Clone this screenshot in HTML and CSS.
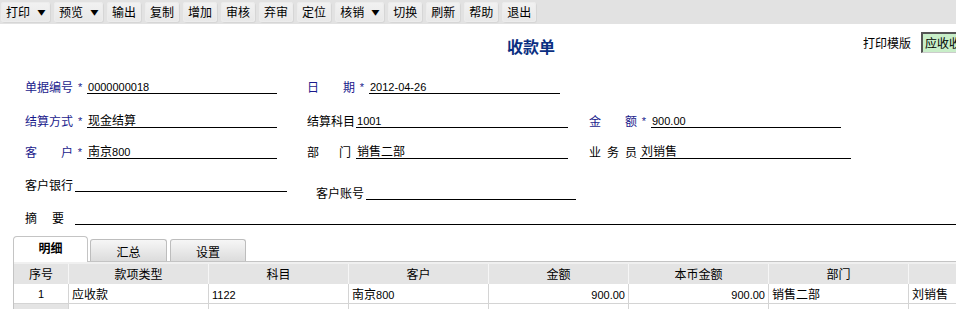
FILE: index.html
```html
<!DOCTYPE html>
<html lang="zh-CN">
<head>
<meta charset="utf-8">
<title>收款单</title>
<link rel="stylesheet" href="styles.css">
</head>
<body>
<div class="toolbar">
  <span class="btn">打印<span class="arrow">▼</span></span>
  <span class="btn">预览<span class="arrow">▼</span></span>
  <span class="btn">输出</span>
  <span class="btn">复制</span>
  <span class="btn">增加</span>
  <span class="btn">审核</span>
  <span class="btn">弃审</span>
  <span class="btn">定位</span>
  <span class="btn">核销<span class="arrow">▼</span></span>
  <span class="btn">切换</span>
  <span class="btn">刷新</span>
  <span class="btn">帮助</span>
  <span class="btn">退出</span>
</div>

<div class="head">
  <div class="title">收款单</div>
  <div class="tpl">
    <span class="tpl-label">打印模版</span>
    <span class="tpl-select">应收收</span>
  </div>
</div>

<div class="form">
  <div class="row r1">
    <div class="field f1"><span class="lbl req">单据编号</span><span class="star">*</span><span class="inp w190"><span class="num">0000000018</span></span></div>
    <div class="field f2"><span class="lbl req just">日<i></i>期</span><span class="star">*</span><span class="inp w191"><span class="num">2012-04-26</span></span></div>
  </div>
  <div class="row r2">
    <div class="field f1"><span class="lbl req">结算方式</span><span class="star">*</span><span class="inp w190">现金结算</span></div>
    <div class="field f2"><span class="lbl">结算科目</span><span class="inp w212 gap1"><span class="num">1001</span></span></div>
    <div class="field f3"><span class="lbl req just">金<i></i>额</span><span class="star">*</span><span class="inp w190"><span class="num">900.00</span></span></div>
  </div>
  <div class="row r3">
    <div class="field f1"><span class="lbl req just">客<i></i>户</span><span class="star">*</span><span class="inp w190">南京<span class="num">800</span></span></div>
    <div class="field f2"><span class="lbl just narrow">部<i></i>门</span><span class="inp w212 gap5">销售二部</span></div>
    <div class="field f3"><span class="lbl just">业<i></i>务<i></i>员</span><span class="inp w211 gap3">刘销售</span></div>
  </div>
  <div class="row r4">
    <div class="field f4"><span class="lbl">客户银行</span><span class="inp w212 gap2"></span></div>
    <div class="field f5"><span class="lbl">客户账号</span><span class="inp w210 gap2"></span></div>
  </div>
  <div class="row r5">
    <div class="field grow"><span class="lbl just narrow2">摘<i></i>要</span><span class="inp grow gap2"></span></div>
  </div>
</div>

<div class="tabs">
  <span class="tab active">明细</span>
  <span class="tab t2">汇总</span>
  <span class="tab t3">设置</span>
</div>
<div class="panel">
  <div class="band"></div>
  <div class="grid">
    <div class="hd c1">序号</div>
    <div class="hd">款项类型</div>
    <div class="hd">科目</div>
    <div class="hd">客户</div>
    <div class="hd">金额</div>
    <div class="hd">本币金额</div>
    <div class="hd">部门</div>
    <div class="hd"></div>

    <div class="cell c1 ctr num">1</div>
    <div class="cell">应收款</div>
    <div class="cell"><span class="num">1122</span></div>
    <div class="cell">南京<span class="num">800</span></div>
    <div class="cell right"><span class="num">900.00</span></div>
    <div class="cell right"><span class="num">900.00</span></div>
    <div class="cell">销售二部</div>
    <div class="cell">刘销售</div>

    <div class="cell c1 gray"></div>
    <div class="cell"></div>
    <div class="cell"></div>
    <div class="cell"></div>
    <div class="cell"></div>
    <div class="cell"></div>
    <div class="cell"></div>
    <div class="cell"></div>
  </div>
</div>
</body>
</html>
```

FILE: styles.css
```css
html, body {
  margin: 0;
  padding: 0;
  background: #ffffff;
  overflow: hidden;
}
body {
  width: 956px;
  height: 309px;
  font-family: "Noto Sans CJK SC", "Liberation Sans", sans-serif;
  font-size: 12px;
  color: #000;
}

.num {
  font-family: "Liberation Sans", "Noto Sans CJK SC", sans-serif;
  font-size: 11px;
}

/* toolbar */
.toolbar {
  height: 24px;
  background: #e2e2e2;
  display: flex;
  align-items: center;
  gap: 4px;
  padding-left: 1px;
  box-sizing: border-box;
}
.btn {
  height: 20px;
  line-height: 20px;
  padding: 0 5px;
  border-radius: 3px;
  background: linear-gradient(#f2f2f2, #e8e8e8);
  box-shadow: inset 0 0 0 1px #ececec, 1px 1px 0 #d6d6d6;
  display: flex;
  align-items: center;
  white-space: nowrap;
}
.arrow {
  font-size: 7px;
  margin-left: 8px;
  margin-right: 0;
  transform: scaleX(1.2);
}

/* header */
.head {
  height: 40px;
  display: flex;
  align-items: center;
}
.title {
  margin-left: 507px;
  font-size: 16px;
  font-weight: bold;
  color: #0b2f82;
  line-height: 20px;
  padding-top: 4px;
}
.tpl {
  margin-left: auto;
  display: flex;
  align-items: center;
  margin-top: -4px;
  white-space: nowrap;
  overflow: hidden;
  width: 93px;
}
.tpl-label {
  margin-right: 10px;
}
.tpl-select {
  height: 18px;
  line-height: 18px;
  padding-left: 2px;
  width: 40px;
  background: #c8eec8;
  border-left: 2px solid #555;
  border-top: 2px solid #555;
  border-bottom: 1px solid #ccc;
  white-space: nowrap;
}

/* form */
.form {
  padding-left: 25px;
}
.row {
  display: flex;
  align-items: flex-end;
  height: 20px;
}
.r1 { margin-top: 10px; }
.r2 { margin-top: 14px; }
.r3 { margin-top: 11px; }
.r4 { margin-top: 18px; align-items: flex-start; height: 28px; }
.r5 { margin-top: 0; }

.field {
  display: flex;
  align-items: flex-end;
}
.f1 { width: 282px; }
.f2 { width: 282px; }
.f4 { width: 291px; }
.f5 { margin-top: 8px; }
.grow { flex: 1; }

.lbl {
  line-height: 15px;
  white-space: nowrap;
}
.lbl.req { color: #1a1a8c; }
.lbl.just {
  display: flex;
  width: 48px;
}
.lbl.just i { flex: 1; }
.lbl.narrow { width: 44px; }
.lbl.narrow2 { width: 39px; margin-right: 9px; }
.star {
  width: 14px;
  text-align: center;
  color: #1a1a8c;
  font-family: "Liberation Sans", sans-serif;
  font-size: 11px;
  line-height: 13px;
}
.inp {
  display: block;
  height: 14px;
  line-height: 14px;
  border-bottom: 1px solid #000;
  padding-left: 1px;
  white-space: nowrap;
}
.w190 { width: 189px; }
.w191 { width: 190px; }
.w212 { width: 211px; }
.w211 { width: 210px; }
.w210 { width: 209px; }
.gap1 { margin-left: 1px; }
.gap2 { margin-left: 2px; }
.gap3 { margin-left: 3px; }
.gap5 { margin-left: 5px; }

/* tabs */
.tabs {
  margin-top: 11px;
  padding-left: 13px;
  display: flex;
  align-items: flex-end;
  height: 26px;
  position: relative;
  z-index: 1;
}
.tab {
  box-sizing: border-box;
  text-align: center;
  white-space: nowrap;
}
.tab.active {
  width: 75px;
  height: 26px;
  line-height: 22px;
  font-weight: bold;
  background: #fff;
  border: 1px solid #c4c4c4;
  border-bottom: none;
  border-radius: 4px 4px 0 0;
}
.tab.t2, .tab.t3 {
  height: 22px;
  line-height: 24px;
  background: linear-gradient(#f6f6f6, #dcdcdc);
  border: 1px solid #bdbdbd;
  border-bottom: none;
  border-radius: 3px 3px 0 0;
  margin-bottom: 1px;
}
.tab.t2 { width: 77px; margin-left: 2px; }
.tab.t3 { width: 76px; margin-left: 3px; }

.panel {
  margin-left: 13px;
  margin-top: -1px;
  border-left: 1px solid #c4c4c4;
  border-top: 1px solid #c4c4c4;
}
.band {
  height: 2px;
  background: #f0f0f0;
}
.grid {
  display: grid;
  grid-template-columns: 55px 140px 140px 140px 140px 140px 140px 140px;
  width: 1035px;
}
.hd {
  height: 20px;
  line-height: 20px;
  background: #e4e4e4;
  border-right: 1px solid #f6f6f6;
  text-align: center;
  box-sizing: border-box;
}
.cell {
  height: 20px;
  line-height: 20px;
  border-right: 1px solid #d4d4d4;
  border-bottom: 1px solid #d4d4d4;
  padding: 0 3px;
  box-sizing: border-box;
  white-space: nowrap;
  overflow: hidden;
}
.cell.ctr { text-align: center; }
.cell.right { text-align: right; }
.cell.gray { background: #e4e4e4; }
```
